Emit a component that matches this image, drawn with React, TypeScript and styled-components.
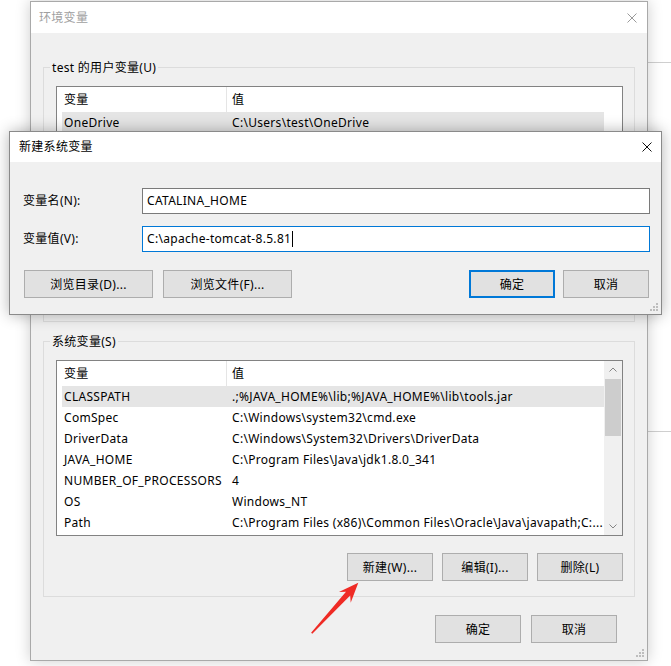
import React from "react";
import styled, { createGlobalStyle } from "styled-components";

const FONT = `"Noto Sans", "Noto Sans CJK SC", sans-serif`;

const GlobalStyle = createGlobalStyle`
  html, body { margin: 0; padding: 0; background: #ffffff; }
  body { font-family: ${FONT}; font-size: 12px; letter-spacing: 0.3px; color: #000; }
  * { box-sizing: border-box; }
`;

const Desktop = styled.div`
  position: relative;
  width: 671px;
  height: 666px;
  overflow: hidden;
  background: #ffffff;
`;

const BackdropLine = styled.div<{ $top: number }>`
  position: absolute;
  left: 648px;
  right: 0;
  top: ${(p) => p.$top}px;
  height: 1px;
  background: #cfcfcf;
`;

const Window = styled.div<{
  $left: number;
  $top: number;
  $width: number;
  $height: number;
  $active?: boolean;
}>`
  position: absolute;
  left: ${(p) => p.$left}px;
  top: ${(p) => p.$top}px;
  width: ${(p) => p.$width}px;
  height: ${(p) => p.$height}px;
  border: 1px solid ${(p) => (p.$active ? "#8a8a8a" : "#a9a9a9")};
  background: #f0f0f0;
  box-shadow: 0 0 14px rgba(0, 0, 0, ${(p) => (p.$active ? 0.3 : 0.2)});
  display: flex;
  flex-direction: column;
`;

const TitleBar = styled.div<{ $height: number; $padLeft: number; $padRight: number }>`
  flex: none;
  height: ${(p) => p.$height}px;
  background: #ffffff;
  display: flex;
  align-items: center;
  justify-content: space-between;
  padding: 0 ${(p) => p.$padRight}px 0 ${(p) => p.$padLeft}px;
`;

const Title = styled.span<{ $active?: boolean }>`
  font-size: 12px;
  line-height: 16px;
  color: ${(p) => (p.$active ? "#000000" : "#a0a0a0")};
`;

const CloseBox = styled.span`
  display: flex;
  width: 10px;
  height: 10px;
`;

const OuterBody = styled.div`
  flex: 1;
  display: flex;
  flex-direction: column;
  padding-top: 26px;
`;

const GroupBox = styled.fieldset<{ $gapTop?: number }>`
  margin: ${(p) => p.$gapTop ?? 0}px 12px 0 12px;
  padding: 0;
  border: 1px solid #dcdcdc;
  min-width: 0;
`;

const GroupLegend = styled.legend`
  margin-left: 6px;
  padding: 0 2px;
  font-size: 12px;
  line-height: 17px;
  color: #000;
`;

const GroupInner = styled.div`
  padding: 10px 11px 15px 12px;
  display: flex;
  flex-direction: column;
`;

const ListBox = styled.div<{ $height: number }>`
  height: ${(p) => p.$height}px;
  border: 1px solid #828282;
  background: #ffffff;
  display: flex;
  overflow: hidden;
`;

const ListContent = styled.div`
  flex: 1;
  min-width: 0;
  padding-left: 5px;
  display: flex;
  flex-direction: column;
`;

const HeaderRow = styled.div`
  flex: none;
  height: 25px;
  display: grid;
  grid-template-columns: 165px 1fr;
`;

const HeaderCell = styled.div<{ $divider?: boolean }>`
  display: flex;
  align-items: center;
  padding-left: ${(p) => (p.$divider ? 2 : 5)}px;
  border-right: ${(p) => (p.$divider ? "1px solid #e5e5e5" : "none")};
  line-height: 16px;
`;

const Row = styled.div<{ $selected?: boolean }>`
  flex: none;
  height: 21px;
  display: grid;
  grid-template-columns: 165px 1fr;
  background: ${(p) => (p.$selected ? "#e5e5e5" : "transparent")};
`;

const Cell = styled.div<{ $first?: boolean }>`
  display: flex;
  align-items: center;
  padding-left: ${(p) => (p.$first ? 2 : 5)}px;
  white-space: nowrap;
  overflow: hidden;
  line-height: 16px;
`;

const ScrollBar = styled.div<{ $blank?: boolean }>`
  flex: none;
  width: 18px;
  background: ${(p) => (p.$blank ? "#ffffff" : "#f0f0f0")};
  display: flex;
  flex-direction: column;
`;

const ScrollArrow = styled.div`
  flex: none;
  height: 17px;
  display: flex;
  align-items: center;
  justify-content: center;
`;

const ScrollTrack = styled.div`
  flex: 1;
  display: flex;
  flex-direction: column;
  padding: 1px 1px 0 1px;
`;

const ScrollThumb = styled.div`
  height: 57px;
  background: #cdcdcd;
`;

const ButtonRow = styled.div<{ $gap: number }>`
  display: flex;
  justify-content: flex-end;
  gap: ${(p) => p.$gap}px;
  margin-top: 17px;
`;

const Button = styled.button<{ $width: number; $default?: boolean }>`
  width: ${(p) => p.$width}px;
  height: 28px;
  margin: 0;
  padding: 0;
  background: #e1e1e1;
  border: ${(p) => (p.$default ? "2px solid #0078d7" : "1px solid #adadad")};
  font-family: ${FONT};
  font-size: 12px;
  letter-spacing: 0.3px;
  color: #000;
  display: flex;
  align-items: center;
  justify-content: center;
`;

const Footer = styled.div`
  display: flex;
  justify-content: flex-end;
  gap: 10px;
  padding: 18px 30px 0 0;
`;

const DialogBody = styled.div`
  flex: 1;
  display: flex;
  flex-direction: column;
  padding: 26px 11px 16px 13px;
`;

const FieldRow = styled.div<{ $gapTop?: number }>`
  display: grid;
  grid-template-columns: 119px 1fr;
  align-items: center;
  height: 26px;
  margin-top: ${(p) => p.$gapTop ?? 0}px;
`;

const FieldLabel = styled.span`
  line-height: 16px;
`;

const TextBox = styled.div<{ $focused?: boolean }>`
  height: 26px;
  border: 1px solid ${(p) => (p.$focused ? "#0078d7" : "#7a7a7a")};
  background: #ffffff;
  padding: 0 4px;
  display: flex;
  align-items: center;
  white-space: nowrap;
  line-height: 16px;
`;

const Caret = styled.span`
  display: inline-block;
  width: 1px;
  height: 16px;
  margin-left: 1px;
  background: #000;
`;

const DialogButtons = styled.div`
  display: flex;
  justify-content: space-between;
  margin-top: 18px;
  padding: 0 1px;
`;

const ButtonGroup = styled.div<{ $gap: number }>`
  display: flex;
  gap: ${(p) => p.$gap}px;
`;

const Grip = styled.svg`
  position: absolute;
  right: 3px;
  bottom: 3px;
`;

const Annotation = styled.svg`
  position: absolute;
  left: 300px;
  top: 575px;
`;

type Item = { name: string; value: string; selected?: boolean };

const userVars: Item[] = [
  { name: "OneDrive", value: String.raw`C:\Users\test\OneDrive`, selected: true },
];

const systemVars: Item[] = [
  { name: "CLASSPATH", value: String.raw`.;%JAVA_HOME%\lib;%JAVA_HOME%\lib\tools.jar`, selected: true },
  { name: "ComSpec", value: String.raw`C:\Windows\system32\cmd.exe` },
  { name: "DriverData", value: String.raw`C:\Windows\System32\Drivers\DriverData` },
  { name: "JAVA_HOME", value: String.raw`C:\Program Files\Java\jdk1.8.0_341` },
  { name: "NUMBER_OF_PROCESSORS", value: "4" },
  { name: "OS", value: "Windows_NT" },
  { name: "Path", value: String.raw`C:\Program Files (x86)\Common Files\Oracle\Java\javapath;C:...` },
];

function CloseIcon({ color }: { color: string }) {
  return (
    <CloseBox>
      <svg width="10" height="10" viewBox="0 0 10 10">
        <path d="M0.5 0.5 L9.5 9.5 M9.5 0.5 L0.5 9.5" stroke={color} strokeWidth="1" fill="none" />
      </svg>
    </CloseBox>
  );
}

function Chevron({ up }: { up?: boolean }) {
  return (
    <svg width="8" height="5" viewBox="0 0 8 5">
      <path
        d={up ? "M0.5 4.5 L4 1 L7.5 4.5" : "M0.5 0.5 L4 4 L7.5 0.5"}
        stroke="#858585"
        strokeWidth="1"
        fill="none"
      />
    </svg>
  );
}

function GripIcon() {
  return (
    <Grip width="8" height="8" viewBox="0 0 8 8">
      {[
        [6, 6],
        [3, 6],
        [0, 6],
        [6, 3],
        [3, 3],
        [6, 0],
      ].map(([x, y]) => (
        <rect key={`${x}-${y}`} x={x} y={y} width="2" height="2" fill="#bdbdbd" />
      ))}
    </Grip>
  );
}

function VarList({ items, height, scroll }: { items: Item[]; height: number; scroll: boolean }) {
  return (
    <ListBox $height={height}>
      <ListContent>
        <HeaderRow>
          <HeaderCell $divider>变量</HeaderCell>
          <HeaderCell>值</HeaderCell>
        </HeaderRow>
        {items.map((it) => (
          <Row key={it.name} $selected={it.selected}>
            <Cell $first>{it.name}</Cell>
            <Cell>{it.value}</Cell>
          </Row>
        ))}
      </ListContent>
      {scroll ? (
        <ScrollBar>
          <ScrollArrow>
            <Chevron up />
          </ScrollArrow>
          <ScrollTrack>
            <ScrollThumb />
          </ScrollTrack>
          <ScrollArrow>
            <Chevron />
          </ScrollArrow>
        </ScrollBar>
      ) : (
        <ScrollBar $blank />
      )}
    </ListBox>
  );
}

export default function App() {
  return (
    <>
      <GlobalStyle />
      <Desktop>
        <BackdropLine $top={62} />
        <BackdropLine $top={431} />

        <Window $left={30} $top={1} $width={618} $height={660}>
          <TitleBar $height={31} $padLeft={8} $padRight={10}>
            <Title>环境变量</Title>
            <CloseIcon color="#9a9a9a" />
          </TitleBar>
          <OuterBody>
            <GroupBox>
              <GroupLegend>test 的用户变量(U)</GroupLegend>
              <GroupInner>
                <VarList items={userVars} height={220} scroll={false} />
              </GroupInner>
            </GroupBox>
            <GroupBox $gapTop={11}>
              <GroupLegend>系统变量(S)</GroupLegend>
              <GroupInner>
                <VarList items={systemVars} height={176} scroll />
                <ButtonRow $gap={9}>
                  <Button $width={86}>新建(W)...</Button>
                  <Button $width={86}>编辑(I)...</Button>
                  <Button $width={86}>删除(L)</Button>
                </ButtonRow>
              </GroupInner>
            </GroupBox>
            <Footer>
              <Button $width={86}>确定</Button>
              <Button $width={86}>取消</Button>
            </Footer>
          </OuterBody>
          <GripIcon />
        </Window>

        <Window $left={9} $top={131} $width={653} $height={184} $active>
          <TitleBar $height={30} $padLeft={9} $padRight={9}>
            <Title $active>新建系统变量</Title>
            <CloseIcon color="#111111" />
          </TitleBar>
          <DialogBody>
            <FieldRow>
              <FieldLabel>变量名(N):</FieldLabel>
              <TextBox>CATALINA_HOME</TextBox>
            </FieldRow>
            <FieldRow $gapTop={12}>
              <FieldLabel>变量值(V):</FieldLabel>
              <TextBox $focused>
                {String.raw`C:\apache-tomcat-8.5.81`}
                <Caret />
              </TextBox>
            </FieldRow>
            <DialogButtons>
              <ButtonGroup $gap={10}>
                <Button $width={129}>浏览目录(D)...</Button>
                <Button $width={129}>浏览文件(F)...</Button>
              </ButtonGroup>
              <ButtonGroup $gap={8}>
                <Button $width={86} $default>
                  确定
                </Button>
                <Button $width={86}>取消</Button>
              </ButtonGroup>
            </DialogButtons>
          </DialogBody>
          <GripIcon />
        </Window>

        <Annotation width="70" height="65" viewBox="0 0 70 65">
          <polygon
            points="12.3,58.8 50.2,20.6 50.7,27.8 58.3,7.7 38.9,17.0 46.0,16.8 11.1,57.8"
            fill="#ef2b25"
          />
        </Annotation>
      </Desktop>
    </>
  );
}
